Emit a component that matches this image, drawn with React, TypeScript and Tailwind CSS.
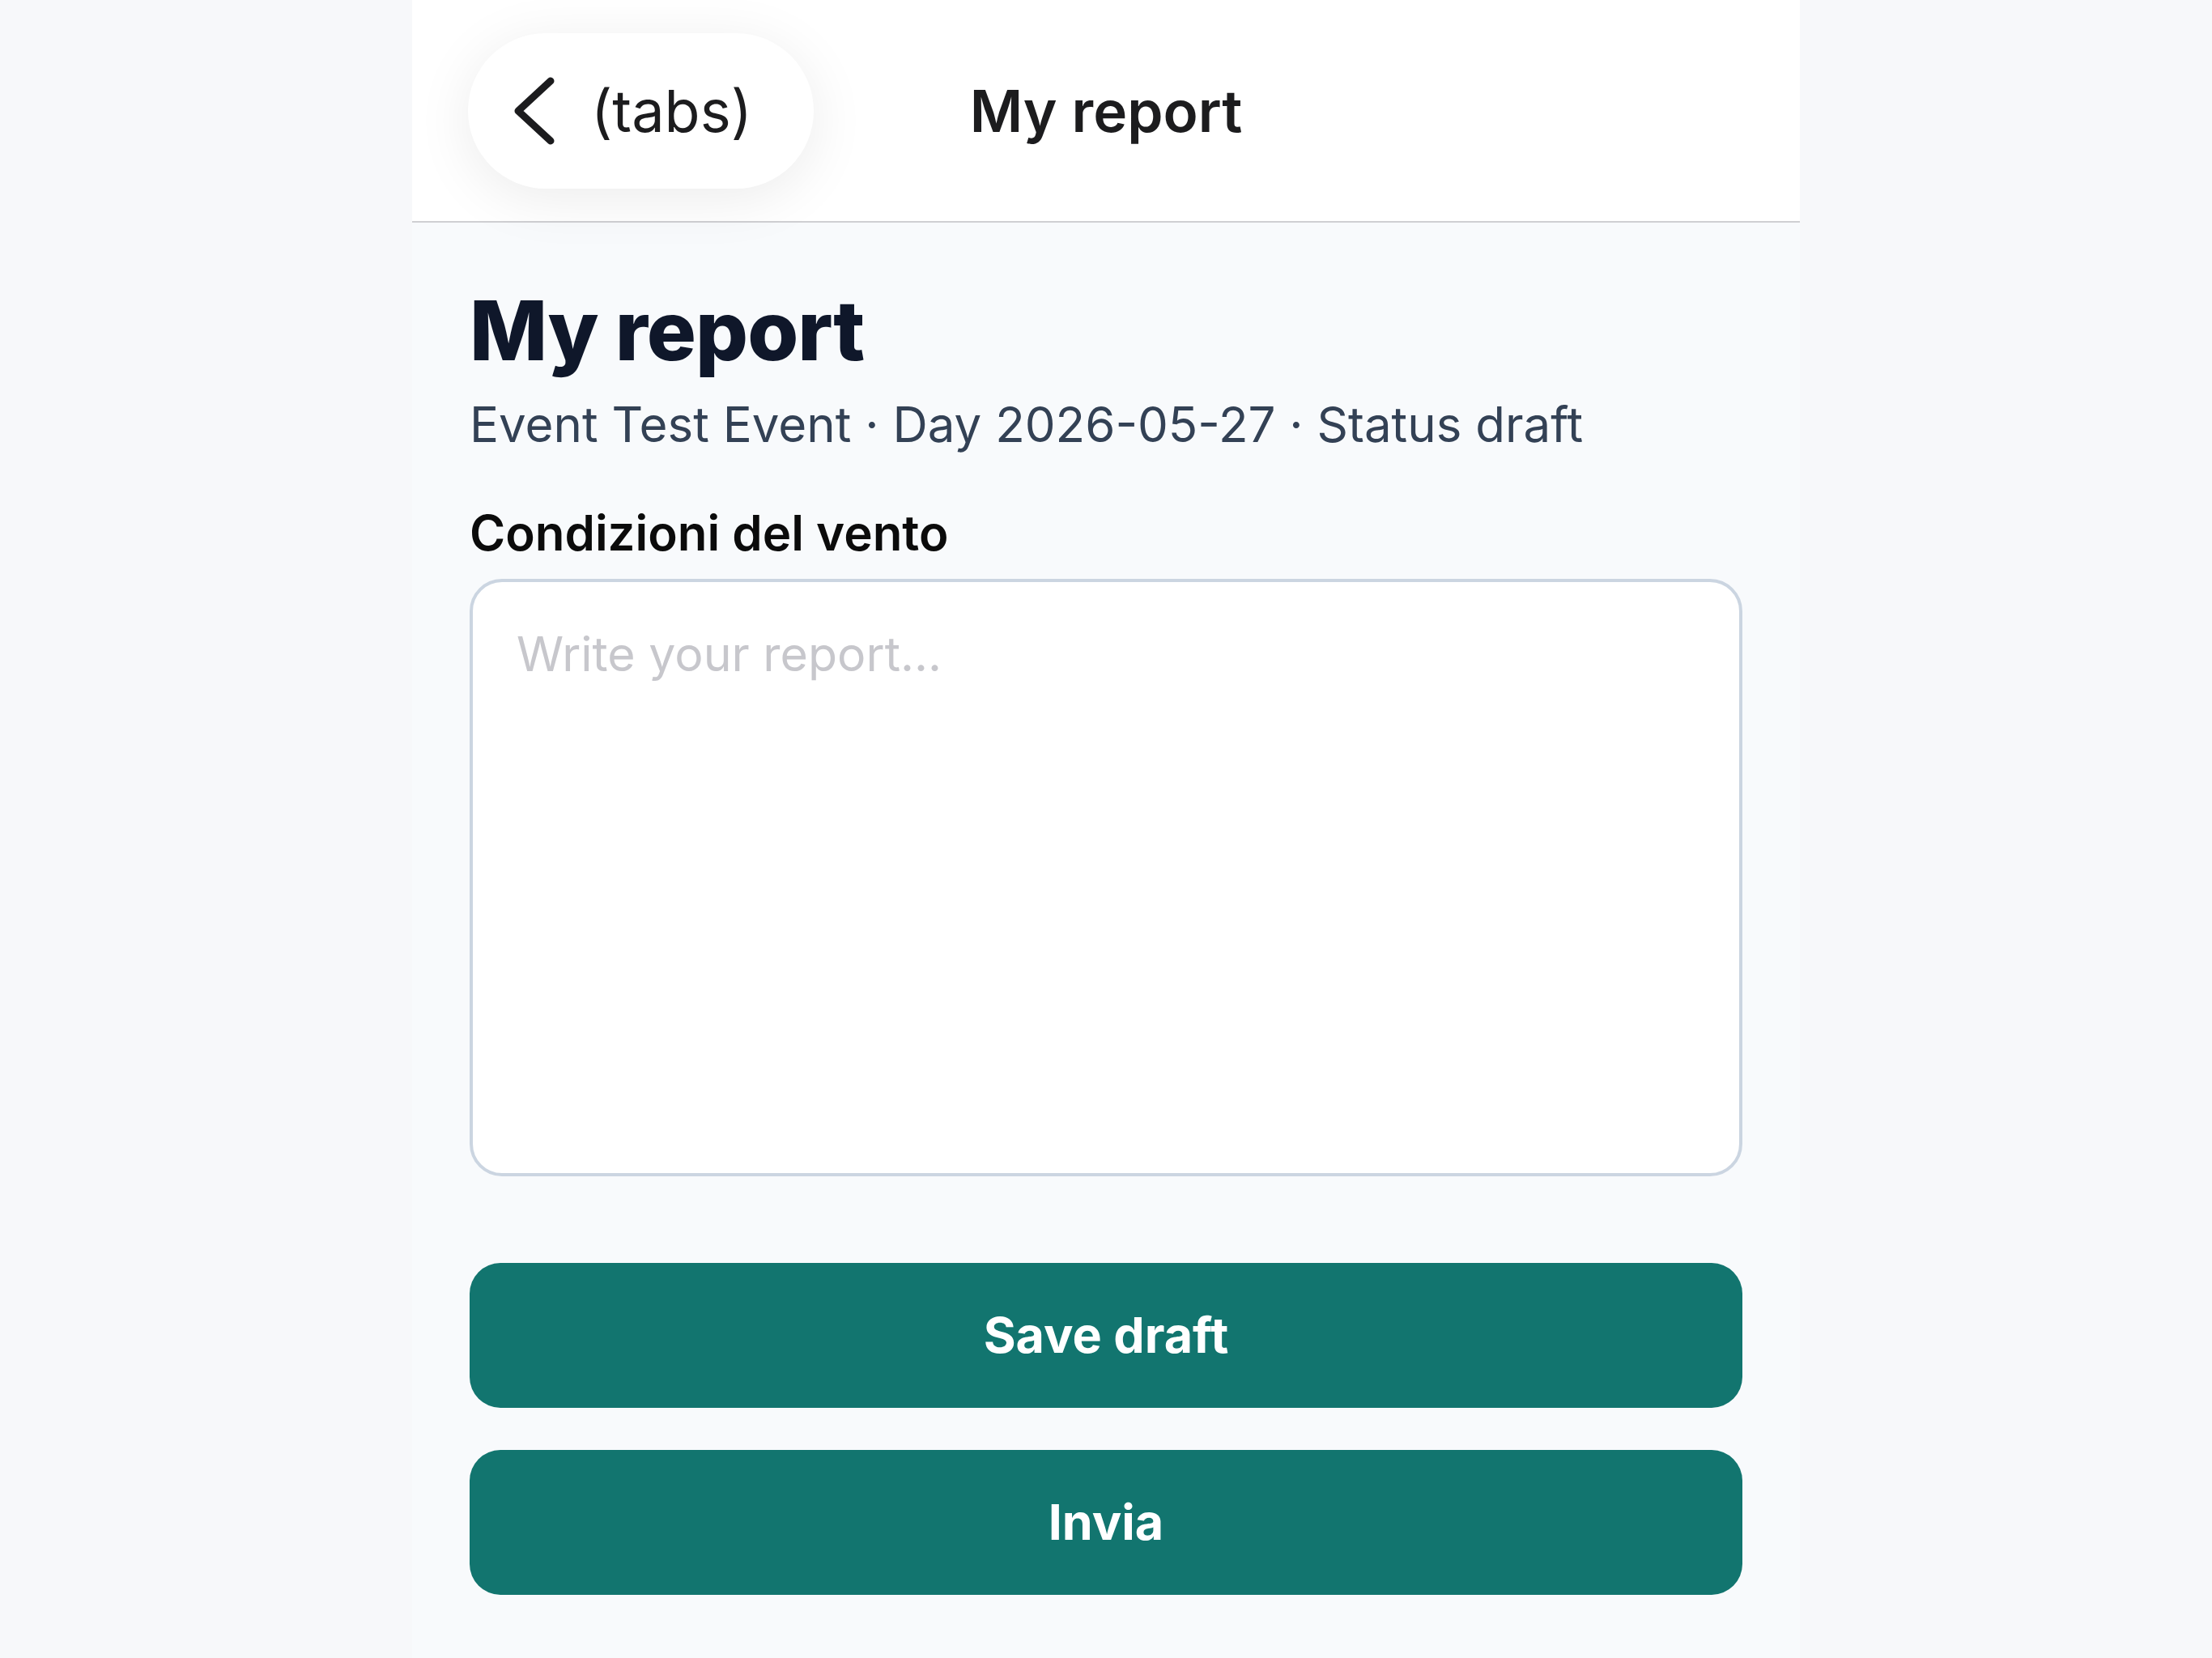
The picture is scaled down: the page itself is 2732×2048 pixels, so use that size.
import React from 'react';

const font = { fontFamily: 'Inter, "Noto Sans", sans-serif' };

const BackButton = () => {
  return (
    <button className="flex items-center h-[192px] pl-[56px] pr-[76px] gap-[44px] rounded-full bg-white shadow-[0_12px_70px_rgba(0,0,0,0.08)]">
      <svg width="52" height="84" viewBox="0 0 52 84" fill="none">
        <polyline points="46,5 6,42 46,79" stroke="#1c1c1e" strokeWidth="9" strokeLinecap="round" strokeLinejoin="round" />
      </svg>
      <span className="text-[72px] leading-[84px] text-[#1c1c1e]">(tabs)</span>
    </button>
  );
};

export default function App() {
  return (
    <div className="min-h-[2048px] w-full flex justify-center bg-[#f7f8fa]" style={font}>
      <div className="w-[1714px] min-h-[2048px] bg-[#f8fafc] flex flex-col">
        <header className="relative z-10 h-[275px] bg-white border-b-2 border-[#cfcfd2] grid grid-cols-[1fr_auto_1fr] items-center px-[69px]">
          <div className="flex">
            <BackButton />
          </div>
          <h2 className="text-[71px] leading-[84px] font-semibold text-[#1c1c1e]">My report</h2>
          <div />
        </header>

        <main className="flex flex-col px-[71px] pt-[72px]">
          <h1 className="text-[102px] leading-[122px] font-extrabold tracking-[-1px] text-[#0f172a]">My report</h1>
          <p className="mt-[19px] text-[60px] leading-[72px] text-[#334155]">
            Event Test Event · Day 2026-05-27 · Status draft
          </p>

          <label className="mt-[62px] text-[60px] leading-[72px] font-semibold text-[#0b0b0b]">Condizioni del vento</label>
          <textarea
            placeholder="Write your report..."
            className="mt-[21px] h-[738px] w-full resize-none rounded-[40px] border-4 border-[#cbd5e1] bg-white px-[54px] pt-[53px] text-[59px] leading-[72px] text-[#1c1c1e] placeholder:text-[#c7c7cc] outline-none"
          />

          <button className="mt-[107px] h-[179px] w-full rounded-[38px] bg-[#12756f] text-white text-[61px] font-bold">
            Save draft
          </button>
          <button className="mt-[52px] h-[179px] w-full rounded-[38px] bg-[#12756f] text-white text-[61px] font-bold">
            Invia
          </button>
        </main>
      </div>
    </div>
  );
}
